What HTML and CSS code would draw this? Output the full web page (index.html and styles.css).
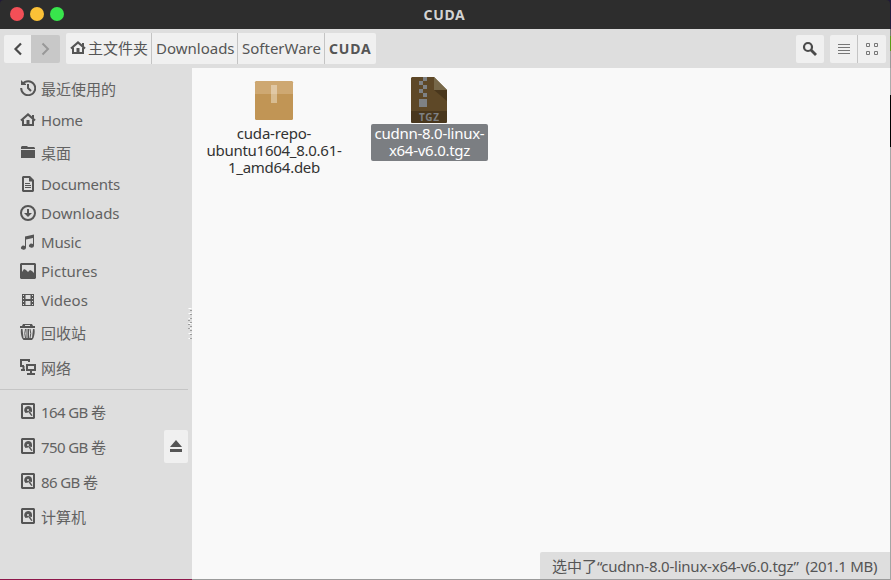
FILE: index.html
```html
<!DOCTYPE html>
<html lang="zh-CN">
<head>
<meta charset="utf-8">
<title>CUDA</title>
<link rel="stylesheet" href="styles.css">
</head>
<body>
<svg class="defs" width="0" height="0" aria-hidden="true">
  <symbol id="home" viewBox="0 0 16 16"><path d="M1 8.500 8 2.500l7 6" fill="none" stroke="#555" stroke-width="2.200"/><path d="M12 3h2v4l-2-2z"/><path d="M2 7.500h2V12h2.500V8h3v4H12V7.500h2V14H2z"/></symbol>
  <symbol id="disk" viewBox="0 0 16 16"><path fill-rule="evenodd" d="M2 0h12l1 1v14l-1 1H2l-1-1V1zM3 2v12h10V2z"/><path fill-rule="evenodd" d="M8 3a4 4 0 0 0-2.500 7L8 9.500l1-1 3 .5V7a4 4 0 0 0-4-4zM8 6a1 1 0 1 1 0 2 1 1 0 0 1 0-2z"/><path d="M8.500 9.200l1.500-.8 2.500 4-1.200.6z"/></symbol>
</svg>
<div class="window">
  <header class="titlebar">
    <i class="dot red"></i><i class="dot yellow"></i><i class="dot green"></i>
    <h1>CUDA</h1>
  </header>
  <nav class="toolbar">
    <div class="history">
      <button class="btn"><svg width="28" height="28"><path d="M17 8.500 11.500 14l5.500 5.500" fill="none" stroke="#4a4a4a" stroke-width="2.200"/></svg></button>
      <button class="btn off"><svg width="28" height="28"><path d="M11.500 8.500 17 14l-5.500 5.500" fill="none" stroke="#989898" stroke-width="2"/></svg></button>
    </div>
    <div class="path">
      <span class="crumb c-home"><svg width="16" height="16"><use href="#home"/></svg><span>主文件夹</span></span>
      <span class="crumb c-down">Downloads</span>
      <span class="crumb c-soft">SofterWare</span>
      <span class="crumb c-cuda">CUDA</span>
    </div>
    <div class="tools">
      <button class="btn search"><svg width="28" height="28"><circle cx="12" cy="12" r="4" fill="none" stroke="#4a4a4a" stroke-width="2.200"/><path d="m15 15 5 5" stroke="#4a4a4a" stroke-width="2.800"/></svg></button>
      <button class="btn list"><svg width="27" height="28"><path fill="#777" d="M8 9h12v1H8zM8 12h12v1H8zM8 15h12v1H8zM8 18h12v1H8z"/></svg></button>
      <button class="btn grid"><svg width="28" height="28"><path fill="none" stroke="#777" d="M8.500 8.500h3v3h-3zM16.500 8.500h3v3h-3zM8.500 16.500h3v3h-3zM16.500 16.500h3v3h-3z"/></svg></button>
    </div>
  </nav>
  <main class="body">
    <aside class="sidebar">
      <ul class="places">
        <li class="cjk"><svg viewBox="0 0 16 16"><path d="M2.600 4A7 7 0 1 1 1.200 8" fill="none" stroke="#555" stroke-width="2"/><path d="M1 0v5h5V4L3 2z"/><path d="M8 4v4l3 3" fill="none" stroke="#555" stroke-width="2"/></svg><span>最近使用的</span></li>
        <li><svg viewBox="0 0 16 16"><use href="#home"/></svg><span class="t-home">Home</span></li>
        <li class="cjk"><svg viewBox="0 0 16 16"><path d="M1 3 2 2h5l1 1h6l1 1v1H1zM1 6h14v8H1z"/></svg><span>桌面</span></li>
        <li><svg viewBox="0 0 16 16"><path fill-rule="evenodd" d="M3 0h7l4 4v11l-1 1H3l-1-1V1zM4 2v12h8V5.500H9V2z"/><path d="M5 7h5v1H5zM5 9h6v1H5zM5 11h6v1H5z"/></svg><span class="t-doc">Documents</span></li>
        <li><svg viewBox="0 0 16 16"><circle cx="8" cy="8" r="7" fill="none" stroke="#555" stroke-width="2"/><path d="M7 4h2v4h3l-4 4-4-4h3z"/></svg><span>Downloads</span></li>
        <li><svg viewBox="0 0 16 16"><path d="M5 2.500 14 .5V12a2.500 2 0 1 1-1-2V4L6 5.500V14a2.500 2 0 1 1-1-2z"/></svg><span class="t-music">Music</span></li>
        <li><svg viewBox="0 0 16 16"><path fill-rule="evenodd" d="M1 0h14l1 1v14l-1 1H1l-1-1V1zM2 2v7l2-3 2 1 2 2 2-2 2 1 2 2V2z"/></svg><span>Pictures</span></li>
        <li><svg viewBox="0 0 16 16"><path fill-rule="evenodd" d="M2 2h12v12H2zM3 3v1h1V3zM3 6v1h1V6zM3 9v1h1V9zM3 12v1h1v-1zM12 3v1h1V3zM12 6v1h1V6zM12 9v1h1V9zM12 12v1h1v-1zM5.500 3v4h5V3zM5.500 9v4h5V9z"/></svg><span>Videos</span></li>
        <li class="cjk"><svg viewBox="0 0 16 16"><path fill-rule="evenodd" d="M3 0h9l1 2h2v2H0V2h2zM5 1v1h5V1z"/><path d="M1 5h1.500l1 9H12l1-9h1.500c.5 3 0 6-1 9L12 16H3.500L2 14C1 11 .5 8 1 5z"/><path d="M5.500 5q-1.500 4.500 0 9M7 5v9M8.500 5v9M10 5q1.500 4.500 0 9" fill="none" stroke="#555"/></svg><span>回收站</span></li>
        <li class="cjk"><svg viewBox="0 0 16 16"><path fill="none" stroke="#555" stroke-width="2" d="M9 3V1H1v6h3M1 11h4M3.500 7v4M7 6h8v5H7zM11 11v4M7 15h8"/></svg><span>网络</span></li>
      </ul>
      <ul class="devices">
        <li class="cjk"><svg viewBox="0 0 16 16"><use href="#disk"/></svg><span class="t-vol">164 GB 卷</span></li>
        <li class="cjk"><svg viewBox="0 0 16 16"><use href="#disk"/></svg><span class="t-vol">750 GB 卷</span><button class="eject"><svg viewBox="0 0 12 12"><path d="M6 0 12 7H0zM0 9h12v3H0z"/></svg></button></li>
        <li class="cjk"><svg viewBox="0 0 16 16"><use href="#disk"/></svg><span class="t-vol">86 GB 卷</span></li>
        <li class="cjk"><svg viewBox="0 0 16 16"><use href="#disk"/></svg><span>计算机</span></li>
      </ul>
      <svg class="grip" width="4" height="34"><path d="M2 0v34" stroke="#fff" stroke-width="3" stroke-dasharray="1 4"/><path d="M3 2v32M1 12v11" stroke="#888" stroke-width="1.500" stroke-dasharray="1 3"/></svg>
    </aside>
    <section class="files">
      <figure class="file deb">
        <svg width="40" height="40"><rect x="1" y="1" width="38" height="39" rx="1.500" fill="#c19555"/><path d="M2.500 1h35L39 2.500V14H1V2.500z" fill="#cea872"/><path d="M17 5h6v18h-6z" fill="#d8bc91"/><path d="M17 5h6v9h-6z" fill="#e0c8a5"/></svg>
        <figcaption><span class="l1">cuda-repo-</span><span>ubuntu1604_8.0.61-</span><span>1_amd64.deb</span></figcaption>
      </figure>
      <figure class="file tgz">
        <svg width="36" height="46"><path d="M1 0h22l13 13v32l-1 1H1l-1-1V1z" fill="#5e4827"/><path d="M23 0 36 13H23z" fill="#776849"/><path d="m23 13h13v11z" fill="#49371d"/><path d="M0 34h36v11l-1 1H1l-1-1z" fill="#49371d"/><path d="M12 0h4v4h-4zM8 4h4v4H8zM12 8h4v4h-4zM8 12h4v4H8zM12 16h4v4h-4zM8 22h8v8H8z" fill="#7e8184"/><text x="8" y="43.500" textLength="20" class="ext">TGZ</text></svg>
        <figcaption><span>cudnn-8.0-linux-</span><span>x64-v6.0.tgz</span></figcaption>
      </figure>
    </section>
  </main>
</div>
<div class="status"><span class="s1">选中了</span><span class="s2">“cudnn-8.0-linux-x64-v6.0.tgz”</span><span class="s3">(201.1 MB)</span></div>
</body>
</html>
```
FILE: styles.css
```css
* { box-sizing: border-box; margin: 0; padding: 0; }
body {
  width: 891px; height: 580px; overflow: hidden; position: relative;
  background: linear-gradient(#211a38 0 29px, #777 29px 36px, #5b9b16 36px 51px, #999 51px 68px, #aaa 68px 95px, #000 95px 147px, #a5a5a5 147px);
  font: 15px/17px "Noto Sans", "Noto Sans CJK SC", sans-serif;
  color: #555;
}
.defs { position: absolute; }
svg { display: block; fill: #555; flex: none; }
ul { list-style: none; }
button { border: 0; font: inherit; }
span { white-space: nowrap; }
.window { width: 890px; height: 580px; display: flex; flex-direction: column; }

.titlebar { height: 29px; background: #2d2d2d; display: flex; align-items: center; gap: 6px; padding-left: 10px; border-radius: 4px 4px 0 0; position: relative; }
.dot { width: 14px; height: 14px; border-radius: 50%; margin-bottom: 1px; }
.red { background: #f34f57; }
.yellow { background: #fbc137; }
.green { background: #38e54c; }
.titlebar h1 { position: absolute; left: 0; right: 1px; top: 6px; text-align: center; font-size: 14px; line-height: 17px; letter-spacing: .7px; color: #d3d3d3; }

.toolbar { height: 39px; background: #dedede; display: flex; align-items: center; padding: 0 4px; }
.history { display: flex; width: 56px; height: 28px; margin-right: 6px; }
.btn { height: 28px; width: 28px; background: #f0f0f0; border-radius: 2px; }
.history .btn:first-child { width: 27px; border-radius: 2px 0 0 2px; }
.history .off { width: 29px; background: #c8c8c8; border-radius: 0 2px 2px 0; }
.path { display: flex; height: 31px; background: #f0f0f0; border-radius: 2px; }
.crumb { display: flex; align-items: center; padding-left: 4px; border-right: 1px solid #c4c4c4; }
.crumb svg { margin-right: 2px; margin-bottom: 2px; }
.c-home { width: 86px; }
.c-down { width: 86px; }
.c-soft { width: 87px; }
.c-cuda { width: 51px; border: 0; font-weight: bold; font-size: 14px; letter-spacing: .8px; }
.tools { display: flex; margin-left: auto; }
.search { margin-right: 6px; }
.list { border-right: 1px solid #c4c4c4; border-radius: 2px 0 0 2px; }
.grid { border-radius: 0 2px 2px 0; }

.body { display: flex; flex: 1; }
.sidebar { width: 192px; background: #dedede; position: relative; border-bottom: 1px solid #8e164a; }
.places { padding: 4px 0 3px; width: 188px; border-bottom: 1px solid #c5c5c5; }
.devices { padding-top: 5px; }
li { display: flex; align-items: center; height: 29px; padding-left: 20px; color: #626262; }
li svg { width: 16px; height: 16px; margin: 0 5px 3px 0; }
li span { margin-bottom: 2px; }
.cjk { height: 35px; }
li.cjk span { margin-bottom: 0; }
.t-home, .t-doc, .t-music { letter-spacing: -.2px; }
.t-vol { letter-spacing: -.6px; }
.eject { width: 24px; height: 33px; margin: 0 4px 2px auto; background: #f0f0f0; border-radius: 2px; display: flex; align-items: center; justify-content: center; }
.eject svg { width: 12px; height: 12px; margin: 0 0 2px; }
.grip { position: absolute; right: 0; top: 240px; fill: none; }

.files { flex: 1; background: #f9f9f9; position: relative; display: flex; align-items: flex-start; border-bottom: 1px solid #9b9b9b; }
.file { display: flex; flex-direction: column; align-items: center; }
.deb { width: 144px; margin-left: 10px; padding-top: 12px; color: #333; }
.tgz { width: 117px; margin-left: 25px; padding-top: 9px; color: #fff; }
.tgz svg { margin-right: 1px; }
figcaption { display: flex; flex-direction: column; align-items: center; letter-spacing: -.27px; }
.deb figcaption { margin-top: 5px; }
.tgz figcaption { width: 117px; height: 37px; margin-top: 1px; padding-top: 1px; background: #7b7e82; border-radius: 2px; }
.l1 { letter-spacing: -.2px; }
.ext { font-size: 10px; font-weight: bold; fill: #7e8184; }

.status { position: absolute; left: 540px; right: 1px; bottom: 1px; height: 27px; background: #dedede; border-radius: 2px 0 0 0; padding-left: 12px; display: flex; align-items: center; padding-top: 2px; }
.s2 { letter-spacing: -.23px; }
.s3 { margin-left: 7px; letter-spacing: -.3px; margin-bottom: 1px; }
```
